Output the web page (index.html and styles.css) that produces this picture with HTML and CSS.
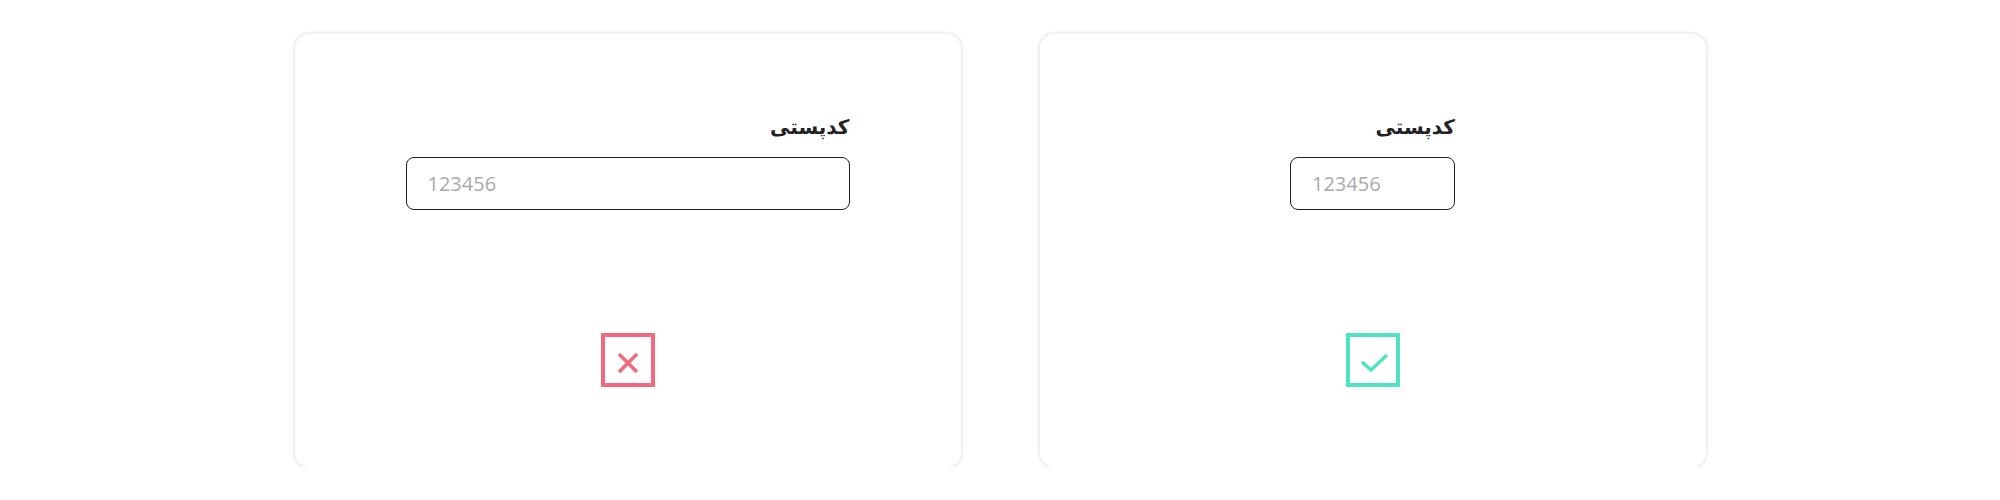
FILE: index.html
```html
<!DOCTYPE html>
<html lang="fa">
<head>
  <meta charset="utf-8">
  <title>کدپستی</title>
  <link rel="stylesheet" href="styles.css">
</head>
<body>
  <main class="board">
    <section class="card">
      <div class="field field-wide">
        <label class="field-label" for="zip-bad">کدپستی</label>
        <input class="field-input" id="zip-bad" type="text" placeholder="123456">
      </div>
      <div class="status">
        <svg width="54" height="54" viewBox="0 0 54 54">
          <rect x="2" y="2" width="50" height="50" fill="none" stroke="#f2687d" stroke-width="4"/>
          <path d="M18 21 L36 39 M36 21 L18 39" fill="none" stroke="#f2687d" stroke-width="3.5"/>
        </svg>
      </div>
    </section>
    <section class="card">
      <div class="field field-narrow">
        <label class="field-label" for="zip-ok">کدپستی</label>
        <input class="field-input" id="zip-ok" type="text" placeholder="123456">
      </div>
      <div class="status">
        <svg width="54" height="54" viewBox="0 0 54 54">
          <rect x="2" y="2" width="50" height="50" fill="none" stroke="#50e3c2" stroke-width="4"/>
          <path d="M16 29 L25 37 L41 22" fill="none" stroke="#50e3c2" stroke-width="3.5"/>
        </svg>
      </div>
    </section>
  </main>
</body>
</html>
```

FILE: styles.css
```css
body {
  margin: 0;
  padding: 0;
  background-color: #fff;
  font-family: "Open Sans", "DejaVu Sans", sans-serif;
}
.board {
  display: flex;
  justify-content: center;
  gap: 79px;
  padding-top: 34px;
}
.card {
  width: 666px;
  height: 433px;
  box-sizing: border-box;
  background-color: #fff;
  border-radius: 14px;
  box-shadow: 0 0 4px rgba(0, 0, 0, 0.18);
  display: flex;
  flex-direction: column;
  align-items: center;
  padding-top: 78px;
}
.field {
  display: flex;
  flex-direction: column;
}
.field-wide {
  width: 444px;
}
.field-narrow {
  width: 165px;
}
.field-label {
  direction: rtl;
  text-align: right;
  font-family: "DejaVu Sans", sans-serif;
  font-weight: bold;
  font-size: 20px;
  line-height: 30px;
  color: #222;
  margin-bottom: 15px;
}
.field-input {
  height: 53px;
  box-sizing: border-box;
  border: 1px solid #222;
  border-radius: 8px;
  padding: 0 21px;
  font-family: "Open Sans", sans-serif;
  font-size: 20px;
  color: #333;
  background-color: #fff;
  outline: none;
}
.field-input::placeholder {
  color: #aaa;
}
.status {
  margin-top: 123px;
  height: 54px;
}
.status svg {
  display: block;
}
```
